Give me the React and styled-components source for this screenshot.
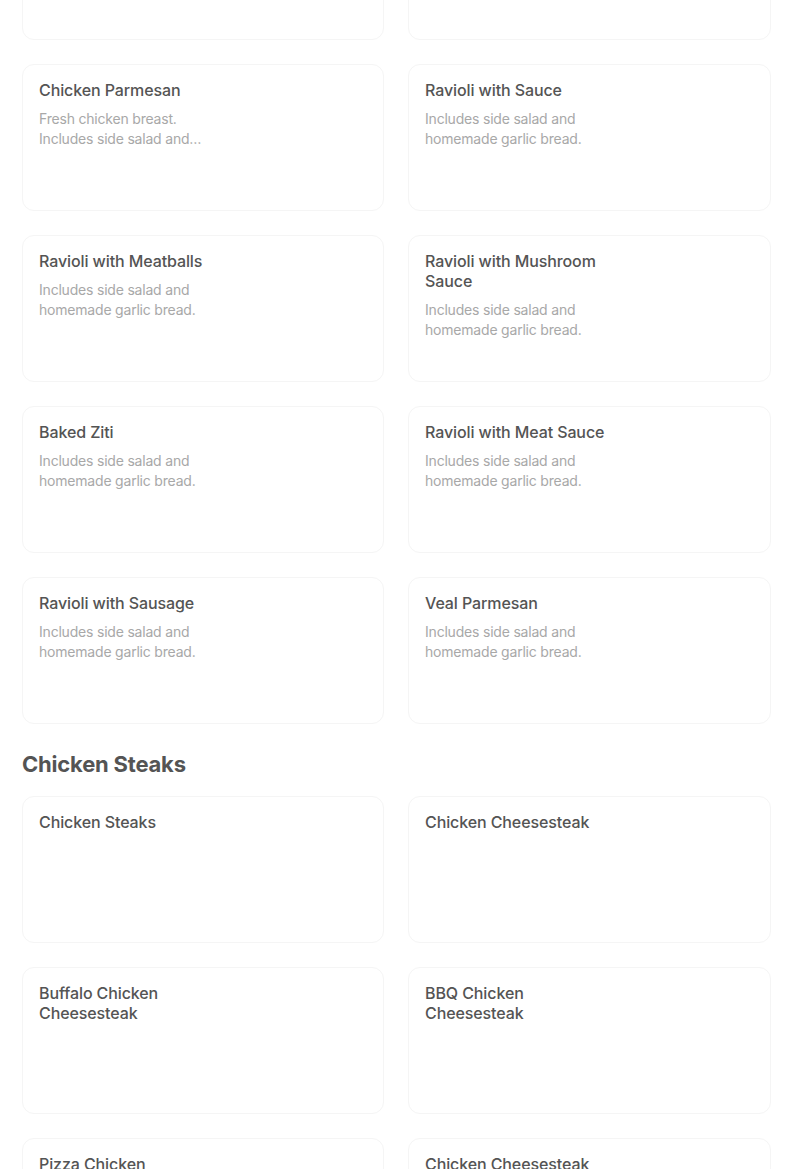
import React from 'react'
import styled, { createGlobalStyle } from 'styled-components'

const GlobalStyle = createGlobalStyle`
  body {
    margin: 0;
    background: #ffffff;
    font-family: Inter, "Noto Sans", Arial, sans-serif;
    overflow: hidden;
  }
`

const Page = styled.div`
  padding: 0 33px 0 22px;
  margin-top: -107px;
`

const Section = styled.section`
  display: flex;
  flex-direction: column;
`

const Heading = styled.h2`
  margin: 26px 0 18px;
  font-size: 22px;
  line-height: 28px;
  font-weight: 700;
  color: #545454;
  letter-spacing: -0.2px;
`

const Grid = styled.div`
  display: grid;
  grid-template-columns: 362px 363px;
  column-gap: 24px;
  row-gap: 24px;
`

const Card = styled.div`
  box-sizing: border-box;
  height: 147px;
  border: 1px solid #f5f5f5;
  border-radius: 12px;
  padding: 15px 16px;
  display: flex;
  flex-direction: column;
`

const Title = styled.div`
  max-width: 190px;
  font-size: 16px;
  line-height: 20px;
  font-weight: 500;
  color: #545454;
  letter-spacing: -0.1px;
`

const Desc = styled.div`
  max-width: 190px;
  margin-top: 9px;
  font-size: 14px;
  line-height: 20px;
  font-weight: 400;
  color: #a8a8a8;
  letter-spacing: -0.2px;
  display: -webkit-box;
  -webkit-line-clamp: 2;
  -webkit-box-orient: vertical;
  overflow: hidden;
`

const STD = 'Includes side salad and homemade garlic bread.'

const pasta = [
  { title: '', desc: '' },
  { title: '', desc: '' },
  { title: 'Chicken Parmesan', desc: 'Fresh chicken breast. Includes side salad and homemade garlic bread.' },
  { title: 'Ravioli with Sauce', desc: STD },
  { title: 'Ravioli with Meatballs', desc: STD },
  { title: 'Ravioli with Mushroom Sauce', desc: STD },
  { title: 'Baked Ziti', desc: STD },
  { title: 'Ravioli with Meat Sauce', desc: STD },
  { title: 'Ravioli with Sausage', desc: STD },
  { title: 'Veal Parmesan', desc: STD },
]

const steaks = [
  { title: 'Chicken Steaks' },
  { title: 'Chicken Cheesesteak' },
  { title: 'Buffalo Chicken Cheesesteak' },
  { title: 'BBQ Chicken Cheesesteak' },
  { title: 'Pizza Chicken' },
  { title: 'Chicken Cheesesteak' },
]

const Item = ({ title, desc }) => (
  <Card>
    {title && <Title>{title}</Title>}
    {desc && <Desc>{desc}</Desc>}
  </Card>
)

const App = () => {
  return (
    <>
      <GlobalStyle />
      <Page>
        <Section>
          <Grid>
            {pasta.map((it, i) => (
              <Item key={i} {...it} />
            ))}
          </Grid>
        </Section>
        <Section>
          <Heading>Chicken Steaks</Heading>
          <Grid>
            {steaks.map((it, i) => (
              <Item key={i} {...it} />
            ))}
          </Grid>
        </Section>
      </Page>
    </>
  )
}

export default App
